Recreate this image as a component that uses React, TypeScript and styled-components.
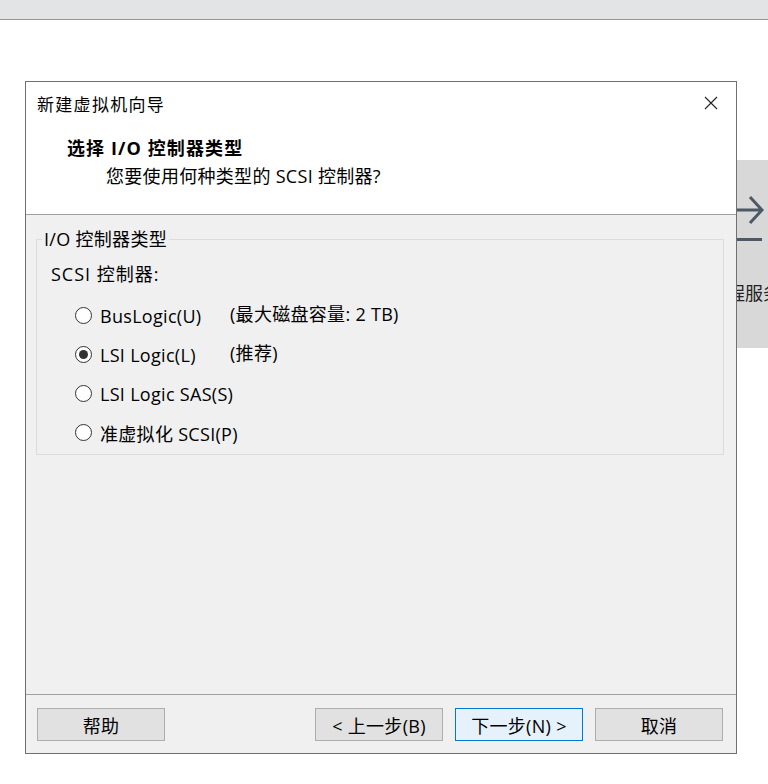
import React from "react";
import styled, { createGlobalStyle } from "styled-components";

const GlobalStyle = createGlobalStyle`
  html, body {
    margin: 0;
    padding: 0;
    background: #ffffff;
    overflow: hidden;
    font-family: "Open Sans", "Noto Sans CJK SC", sans-serif;
    color: #000;
  }
`;

const Page = styled.div`
  position: relative;
  width: 768px;
  height: 784px;
  overflow: hidden;
  background: #fff;
`;

const TopBar = styled.div`
  height: 19px;
  background: #e3e4e6;
  border-bottom: 1px solid #6f9fbd;
`;

// side panel of the app behind the modal, partly covered
const SidePanel = styled.div`
  position: absolute;
  left: 700px;
  top: 160px;
  width: 110px;
  height: 188px;
  background: #d8d8d8;
  display: flex;
  flex-direction: column;
  align-items: flex-start;
`;

const SideIcon = styled.svg`
  margin: 35px 0 0 36px;
  display: block;
`;

const SideText = styled.div`
  margin: 37px 0 0 9px;
  font-family: "Noto Sans CJK SC", sans-serif;
  font-size: 18px;
  line-height: 24px;
  color: #222;
  white-space: nowrap;
`;

const Dialog = styled.div`
  position: absolute;
  left: 25px;
  top: 81px;
  width: 710px;
  height: 671px;
  border: 1px solid #707070;
  background: #f0f0f0;
  display: flex;
  flex-direction: column;
`;

const TitleBar = styled.div`
  height: 43px;
  background: #fff;
  display: flex;
  align-items: center;
  justify-content: space-between;
  padding: 0 18px 1px 11px;
  font-size: 17px;
  letter-spacing: 1.3px;
`;

const CloseButton = styled.svg`
  display: block;
  margin-bottom: 1px;
`;

const Header = styled.div`
  background: #fff;
  border-bottom: 1px solid #a0a0a0;
  padding: 10px 0 0 41px;
  box-sizing: border-box;
  height: 89px;
`;

const HeaderTitle = styled.div`
  font-weight: 700;
  font-size: 18px;
  letter-spacing: 1.1px;
  line-height: 24px;
`;

const HeaderSub = styled.div`
  margin: 4px 0 0 39px;
  font-size: 18px;
  letter-spacing: 0.3px;
  line-height: 24px;
`;

const Body = styled.div`
  flex: 1;
  padding: 14px 12px 0 10px;
`;

const GroupBox = styled.fieldset`
  margin: 0;
  padding: 0 0 2px 14px;
  border: 1px solid #dcdcdc;
  min-width: 0;
`;

const Legend = styled.legend`
  margin-left: -9px;
  padding: 0 2px;
  font-size: 18px;
  letter-spacing: 0.3px;
  line-height: 20px;
`;

const GroupLabel = styled.div`
  margin-top: 13px;
  font-size: 18px;
  letter-spacing: 1px;
  line-height: 24px;
`;

const OptionList = styled.div`
  margin-top: 10px;
  padding-left: 24px;
  display: flex;
  flex-direction: column;
`;

const OptionRow = styled.label`
  height: 39px;
  display: flex;
  align-items: center;
  font-size: 18px;
  letter-spacing: 0.3px;
`;

const Radio = styled.span<{ $checked?: boolean }>`
  width: 15px;
  height: 15px;
  border: 1px solid #333;
  border-radius: 50%;
  background: #fff;
  display: flex;
  align-items: center;
  justify-content: center;
  margin-right: 8px;
  flex-shrink: 0;

  &::after {
    content: "";
    width: 9px;
    height: 9px;
    border-radius: 50%;
    background: #333;
    display: ${(p) => (p.$checked ? "block" : "none")};
  }
`;

const OptionText = styled.span`
  width: 130px;
  white-space: nowrap;
`;

const OptionNote = styled.span`
  white-space: nowrap;
  margin-top: -6px;
`;

const Footer = styled.div`
  border-top: 1px solid #a0a0a0;
  padding: 13px 13px 12px 11px;
  display: flex;
  gap: 12px;
`;

const Spacer = styled.div`
  flex: 1;
`;

const Button = styled.button<{ $primary?: boolean }>`
  width: 128px;
  height: 33px;
  margin: 0;
  padding: 0;
  font-family: "Open Sans", "Noto Sans CJK SC", sans-serif;
  font-size: 18px;
  letter-spacing: 0.3px;
  color: #000;
  background: ${(p) => (p.$primary ? "#e5f1fb" : "#e1e1e1")};
  border: 1px solid ${(p) => (p.$primary ? "#0078d7" : "#adadad")};
  border-radius: 0;
`;

const options = [
  { label: "BusLogic(U)", note: "(最大磁盘容量: 2 TB)", checked: false },
  { label: "LSI Logic(L)", note: "(推荐)", checked: true },
  { label: "LSI Logic SAS(S)", note: "", checked: false },
  { label: "准虚拟化 SCSI(P)", note: "", checked: false },
];

const App = () => {
  return (
    <Page>
      <GlobalStyle />
      <TopBar />

      <SidePanel>
        <SideIcon width="28" height="48" viewBox="0 0 28 48">
          <path d="M0 15 H26 M14 2 L26 15 L14 28" fill="none" stroke="#4b5a66" strokeWidth="3" />
          <rect x="0" y="43" width="26" height="3" fill="#4b5a66" />
        </SideIcon>
        <SideText>远程服务器</SideText>
      </SidePanel>

      <Dialog>
        <TitleBar>
          <span>新建虚拟机向导</span>
          <CloseButton width="14" height="14" viewBox="0 0 14 14">
            <path d="M1 1 L13 13 M13 1 L1 13" stroke="#222" strokeWidth="1.1" />
          </CloseButton>
        </TitleBar>

        <Header>
          <HeaderTitle>选择 I/O 控制器类型</HeaderTitle>
          <HeaderSub>您要使用何种类型的 SCSI 控制器?</HeaderSub>
        </Header>

        <Body>
          <GroupBox>
            <Legend>I/O 控制器类型</Legend>
            <GroupLabel>SCSI 控制器:</GroupLabel>
            <OptionList>
              {options.map((o) => (
                <OptionRow key={o.label}>
                  <Radio $checked={o.checked} />
                  <OptionText>{o.label}</OptionText>
                  {o.note && <OptionNote>{o.note}</OptionNote>}
                </OptionRow>
              ))}
            </OptionList>
          </GroupBox>
        </Body>

        <Footer>
          <Button>帮助</Button>
          <Spacer />
          <Button>&lt; 上一步(B)</Button>
          <Button $primary>下一步(N) &gt;</Button>
          <Button>取消</Button>
        </Footer>
      </Dialog>
    </Page>
  );
};

export default App;
